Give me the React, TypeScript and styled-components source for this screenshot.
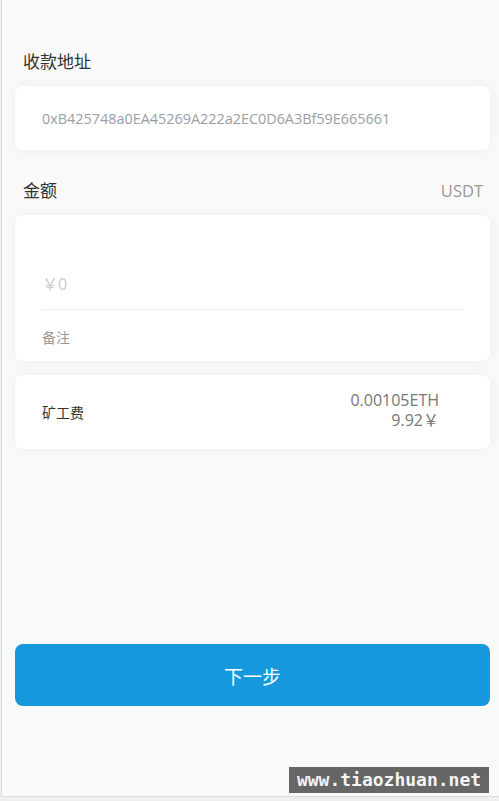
import React from "react";
import styled, { createGlobalStyle } from "styled-components";

const Global = createGlobalStyle`
  html, body { margin: 0; padding: 0; background: #efefef; }
  body { font-family: "Open Sans", "Noto Sans CJK SC", sans-serif; }
  * { box-sizing: border-box; }
`;

const Page = styled.div`
  position: relative;
  width: 499px;
  height: 801px;
  padding-left: 1px;
  background: #efefef;
`;

const Screen = styled.div`
  height: 797px;
  background: #f8f9f8;
  border-left: 1px solid #dcdcdc;
  border-bottom: 1px solid #dcdcdc;
  padding: 50px 9px 0 13px;
  display: flex;
  flex-direction: column;
`;

const LabelRow = styled.div<{ $top?: number }>`
  display: flex;
  justify-content: space-between;
  align-items: center;
  height: 24px;
  margin-top: ${(p) => p.$top ?? 0}px;
  margin-bottom: 12px;
  padding: 0 7px 4px 8px;
`;

const Label = styled.span`
  font-family: "Noto Sans CJK SC", sans-serif;
  font-size: 17px;
  color: #333;
`;

const Unit = styled.span`
  font-size: 16.5px;
  color: #999;
  margin-top: 2px;
`;

const Card = styled.div<{ $mt?: number }>`
  background: #fff;
  border-radius: 8px;
  box-shadow: 0 0 14px rgba(0, 0, 0, 0.045);
  margin-top: ${(p) => p.$mt ?? 0}px;
`;

const AddressCard = styled(Card)`
  height: 64px;
  display: flex;
  align-items: center;
  padding: 0 27px;
  font-size: 14.4px;
  color: #9a9ea4;
`;

const AmountCard = styled(Card)`
  height: 146px;
  padding: 0 27px;
  display: flex;
  flex-direction: column;
`;

const AmountInput = styled.div`
  height: 95px;
  border-bottom: 1px solid #eeeeee;
  display: flex;
  align-items: flex-end;
  padding: 0 0 14px 0;
  font-size: 16px;
  color: #cccccc;
`;

const Note = styled.div`
  flex: 1;
  display: flex;
  align-items: center;
  padding-top: 2px;
  font-family: "Noto Sans CJK SC", sans-serif;
  font-size: 14px;
  color: #999;
`;

const FeeCard = styled(Card)`
  height: 74px;
  display: flex;
  align-items: center;
  justify-content: space-between;
  padding: 0 51px 0 27px;
`;

const FeeLabel = styled.span`
  font-family: "Noto Sans CJK SC", sans-serif;
  font-size: 14px;
  color: #333;
`;

const FeeValues = styled.div`
  display: flex;
  flex-direction: column;
  align-items: flex-end;
  font-size: 16px;
  line-height: 20px;
  color: #777;
  margin-top: -4px;
`;

const NextButton = styled.button`
  margin-top: 195px;
  height: 62px;
  border: none;
  border-radius: 8px;
  background: #1598dc;
  color: #fff;
  font-family: "Noto Sans CJK SC", sans-serif;
  font-size: 19px;
`;

const Watermark = styled.div`
  position: absolute;
  left: 289px;
  top: 767px;
  width: 200px;
  height: 26px;
  background: #666;
  color: #f4f4f4;
  font-family: "DejaVu Sans Mono", monospace;
  font-size: 18px;
  font-weight: bold;
  line-height: 26px;
  text-align: center;
`;

export default function App() {
  return (
    <Page>
      <Global />
      <Screen>
        <LabelRow>
          <Label>收款地址</Label>
        </LabelRow>
        <AddressCard>0xB425748a0EA45269A222a2EC0D6A3Bf59E665661</AddressCard>
        <LabelRow $top={29}>
          <Label>金额</Label>
          <Unit>USDT</Unit>
        </LabelRow>
        <AmountCard>
          <AmountInput>￥0</AmountInput>
          <Note>备注</Note>
        </AmountCard>
        <FeeCard $mt={14}>
          <FeeLabel>矿工费</FeeLabel>
          <FeeValues>
            <span>0.00105ETH</span>
            <span>9.92￥</span>
          </FeeValues>
        </FeeCard>
        <NextButton>下一步</NextButton>
      </Screen>
      <Watermark>www.tiaozhuan.net</Watermark>
    </Page>
  );
}
